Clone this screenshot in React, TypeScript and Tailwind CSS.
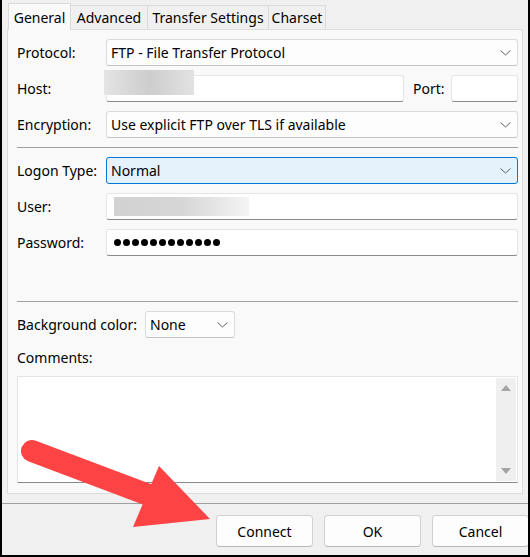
import React from "react";

const FONT = { fontFamily: '"Noto Sans", "Open Sans", sans-serif' };

// Small down chevron used in the combo boxes
const Chevron = () => (
  <svg width="11" height="6" viewBox="0 0 11 6" className="shrink-0">
    <path d="M0.5 0.5 L5.5 5 L10.5 0.5" fill="none" stroke="#606060" strokeWidth="1" />
  </svg>
);

const Select = ({ value, active = false, className = "" }: { value: string; active?: boolean; className?: string }) => (
  <div
    className={
      "h-[27px] flex items-center justify-between pl-[4px] pr-[6px] rounded-[3px] border " +
      (active ? "bg-[#e5f1fb] border-[#0078d4]" : "bg-[#fdfdfd] border-[#dcdcdc] border-b-[#c4c4c4]") +
      " " +
      className
    }
  >
    <span className="leading-none">{value}</span>
    <Chevron />
  </div>
);

const Input = ({ className = "", children }: { className?: string; children?: React.ReactNode }) => (
  <div
    className={
      "h-[27px] flex items-center px-[7px] bg-white rounded-[3px] border border-[#e5e5e5] border-b-[#8a8a8a] " + className
    }
  >
    {children}
  </div>
);

const Row = ({ label, children, className = "" }: { label: string; children: React.ReactNode; className?: string }) => (
  <div className={"flex items-center " + className}>
    <span className="w-[89px] shrink-0">{label}</span>
    <div className="flex-1">{children}</div>
  </div>
);

const tabs = [
  { name: "Advanced", w: "w-[77px]" },
  { name: "Transfer Settings", w: "w-[121px]" },
  { name: "Charset", w: "w-[57px]" },
];

export default function App() {
  return (
    <div
      className="relative w-[530px] h-[557px] bg-[#f0f0f0] border-x-2 border-b-2 border-black overflow-hidden flex flex-col text-[14px] text-black"
      style={FONT}
    >
      {/* Tabs */}
      <div className="h-[29px] flex items-end pl-[6px] shrink-0">
        <div className="h-[27px] w-[63px] bg-[#f9f9f9] border border-b-0 border-[#d9d9d9] flex items-center justify-center relative top-px z-10">
          General
        </div>
        {tabs.map((t) => (
          <div
            key={t.name}
            className={t.w + " h-[24px] border border-l-0 border-b-0 border-[#dadada] flex items-center justify-center"}
          >
            {t.name}
          </div>
        ))}
      </div>

      {/* Panel */}
      <div className="ml-[5px] w-[516px] h-[465px] shrink-0 bg-[#f9f9f9] border border-[#dcdcdc] pl-[9px] pr-[4px] pt-[9px] flex flex-col">
        <Row label="Protocol:">
          <Select value="FTP - File Transfer Protocol" />
        </Row>
        <div className="flex items-center mt-[9px]">
          <span className="w-[89px] shrink-0">Host:</span>
          <Input className="w-[298px]" />
          <span className="ml-[9px] w-[38px]">Port:</span>
          <Input className="flex-1" />
        </div>
        <Row label="Encryption:" className="mt-[9px]">
          <Select value="Use explicit FTP over TLS if available" />
        </Row>

        <div className="mt-[9px] h-px bg-[#a0a0a0]" />

        <Row label="Logon Type:" className="mt-[9px]">
          <Select value="Normal" active />
        </Row>
        <Row label="User:" className="mt-[9px]">
          <Input>
            <div className="w-[135px] h-[19px] bg-gradient-to-r from-[#d2d2d2] via-[#d6d6d6] to-[#f4f4f4]" />
          </Input>
        </Row>
        <Row label="Password:" className="mt-[9px]">
          <Input>
            <div className="flex gap-[2px]">
              {Array.from({ length: 12 }).map((_, i) => (
                <span key={i} className="w-[7px] h-[7px] rounded-full bg-black" />
              ))}
            </div>
          </Input>
        </Row>

        <div className="mt-[45px] h-px bg-[#a0a0a0]" />

        <div className="mt-[9px] flex items-center">
          <span className="w-[128px] shrink-0">Background color:</span>
          <Select value="None" className="w-[90px]" />
        </div>
        <div className="mt-[9px] h-[20px] flex items-center">Comments:</div>
        <div className="mt-[9px] h-[107px] bg-white border border-[#e5e5e5] border-b-[#8a8a8a] flex justify-end">
          <div className="w-[20px] my-px mr-px bg-[#efefef] flex flex-col items-center justify-between py-[7px]">
            <svg width="10" height="6" viewBox="0 0 10 6">
              <path d="M0 6 L5 0 L10 6 Z" fill="#a3a3a3" />
            </svg>
            <svg width="10" height="6" viewBox="0 0 10 6">
              <path d="M0 0 L10 0 L5 6 Z" fill="#a3a3a3" />
            </svg>
          </div>
        </div>
      </div>

      {/* Bottom bar */}
      <div className="mt-[9px] h-px bg-[#a0a0a0] shrink-0" />
      <div className="flex gap-[11px] pl-[214px] mt-[11px]">
        {["Connect", "OK", "Cancel"].map((b) => (
          <div
            key={b}
            className="w-[97px] h-[32px] shrink-0 rounded-[4px] bg-[#fdfdfd] border border-[#d0d0d0] border-b-[#b8b8b8] flex items-center justify-center"
          >
            {b}
          </div>
        ))}
      </div>

      {/* Blurred host value */}
      <div className="absolute left-[102px] top-[70px] w-[90px] h-[25px] bg-gradient-to-r from-[#e4e4e4] via-[#cdcdcd] to-[#e2e2e2]" />

      {/* Red annotation arrow */}
      <svg className="absolute left-0 top-0 pointer-events-none" width="530" height="557" viewBox="0 0 530 557">
        <line x1="30" y1="451" x2="160" y2="500" stroke="#fd4343" strokeWidth="22" strokeLinecap="round" />
        <polygon points="157,466 131,527 208,519" fill="#fd4343" />
      </svg>
    </div>
  );
}
